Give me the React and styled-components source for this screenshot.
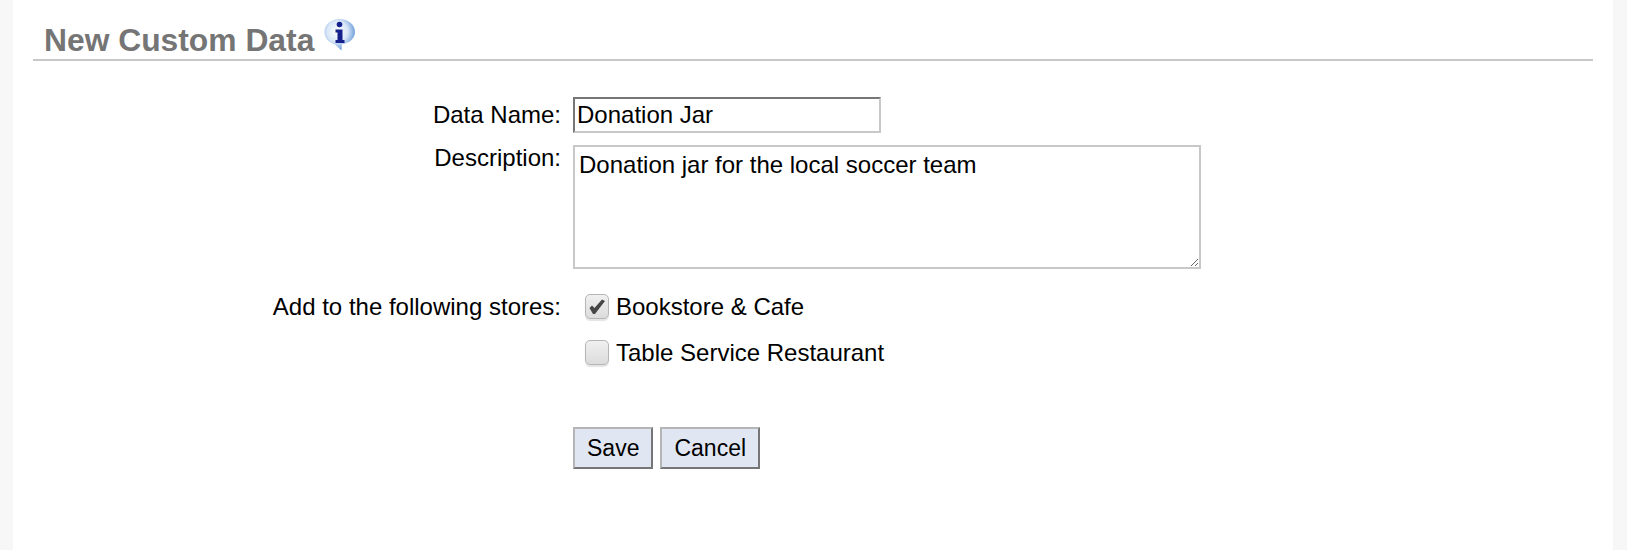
import React from 'react';
import styled, { createGlobalStyle } from 'styled-components';

const Global = createGlobalStyle`
    html, body {
        margin: 0;
        padding: 0;
        background-color: #f7f7f7;
    }
`

const Page = styled.div`
    box-sizing: border-box;
    width: 1600px;
    height: 550px;
    margin-left: 13px;
    padding: 0 20px;
    background-color: #ffffff;
    font-family: 'Liberation Sans', Arial, sans-serif;
    font-size: 24px;
    color: #000000;
`

const Heading = styled.h1`
    display: flex;
    align-items: flex-start;
    gap: 9px;
    box-sizing: border-box;
    height: 61px;
    margin: 0;
    padding: 22px 0 0 11px;
    border-bottom: 2px solid #c8c8c8;
    font-size: 31.8px;
    line-height: 37px;
    font-weight: bold;
    color: #757575;
`

const InfoIcon = styled.svg`
    width: 33px;
    height: 33px;
    margin-top: -4px;
`

const Form = styled.form`
    display: grid;
    grid-template-columns: 528px 1fr;
    column-gap: 12px;
    padding-top: 36px;
`

const Label = styled.label`
    padding-top: ${props => props.$top || 0}px;
    text-align: right;
    line-height: 35px;
`

const NameInput = styled.input`
    box-sizing: border-box;
    width: 308px;
    height: 36px;
    padding: 0 2px;
    border-width: 2px;
    border-style: solid;
    border-color: #767676 #c8c8c8 #c8c8c8 #767676;
    font: inherit;
    outline: none;
`

const DescriptionArea = styled.textarea`
    display: block;
    box-sizing: border-box;
    width: 628px;
    height: 124px;
    margin-top: 12px;
    padding: 4px 4px;
    border: 2px solid #c8c8c8;
    font: inherit;
    line-height: 28px;
    outline: none;
`

const StoreList = styled.div`
    display: flex;
    flex-direction: column;
    gap: 11px;
    padding: 20px 0 0 12px;
`

const StoreRow = styled.div`
    display: flex;
    align-items: center;
    gap: 7px;
    height: 35px;
`

const CheckBox = styled.span`
    display: flex;
    align-items: center;
    justify-content: center;
    box-sizing: border-box;
    width: 24px;
    height: 25px;
    border: 1px solid #b5b5b5;
    border-radius: 5px;
    background: linear-gradient(#f0f0f0, #dcdcdc);
    box-shadow: 0 2px 1px #e4e4e4;
`

const Buttons = styled.div`
    display: flex;
    gap: 7px;
    grid-column: 2;
    padding-top: 57px;
`

const Button = styled.button`
    box-sizing: border-box;
    height: 42px;
    padding: 0 12px;
    border-width: 2px;
    border-style: solid;
    border-color: #b5b5b5 #767676 #767676 #b5b5b5;
    background-color: #e1e7f2;
    color: #000000;
    font: inherit;
    font-size: 23px;
`

const stores = [
    { name: 'Bookstore & Cafe', checked: true },
    { name: 'Table Service Restaurant', checked: false },
];

const App = () => {
    return (
        <Page>
            <Global />
            <Heading>
                New Custom Data
                <InfoIcon viewBox="0 0 33 33">
                    <defs>
                        <radialGradient id="bubble" cx="0.42" cy="0.4" r="0.62">
                            <stop offset="0" stopColor="#ffffff" />
                            <stop offset="0.55" stopColor="#d8e6f7" />
                            <stop offset="1" stopColor="#5f94d6" />
                        </radialGradient>
                    </defs>
                    <path d="M16.500 1C8 1 1.500 6.500 1.500 14c0 6.500 5 11 10.500 12.500l6.500 6 .5-6.200c7-1 13-5.800 13-12.300C32 6.500 25 1 16.500 1z" fill="url(#bubble)" />
                    <circle cx="16.500" cy="6.500" r="2.800" fill="#14208c" />
                    <path d="M12.500 11.500h7v10.500h2V25h-9v-3h2v-7.500h-2z" fill="#14208c" />
                </InfoIcon>
            </Heading>
            <Form>
                <Label>Data Name:</Label>
                <NameInput defaultValue="Donation Jar" />
                <Label $top={7}>Description:</Label>
                <DescriptionArea defaultValue="Donation jar for the local soccer team" />
                <Label as="div" $top={20}>Add to the following stores:</Label>
                <StoreList>
                    {stores.map((store) => (
                        <StoreRow key={store.name}>
                            <CheckBox>
                                {store.checked && (
                                    <svg width="18" height="17" viewBox="0 0 18 17">
                                        <path d="M1.500 10L4 7.500 6.500 10 14 1.500 17 3 7 16H5z" fill="#464646" />
                                    </svg>
                                )}
                            </CheckBox>
                            {store.name}
                        </StoreRow>
                    ))}
                </StoreList>
                <Buttons>
                    <Button type="button">Save</Button>
                    <Button type="button">Cancel</Button>
                </Buttons>
            </Form>
        </Page>
    )
}

export default App;
